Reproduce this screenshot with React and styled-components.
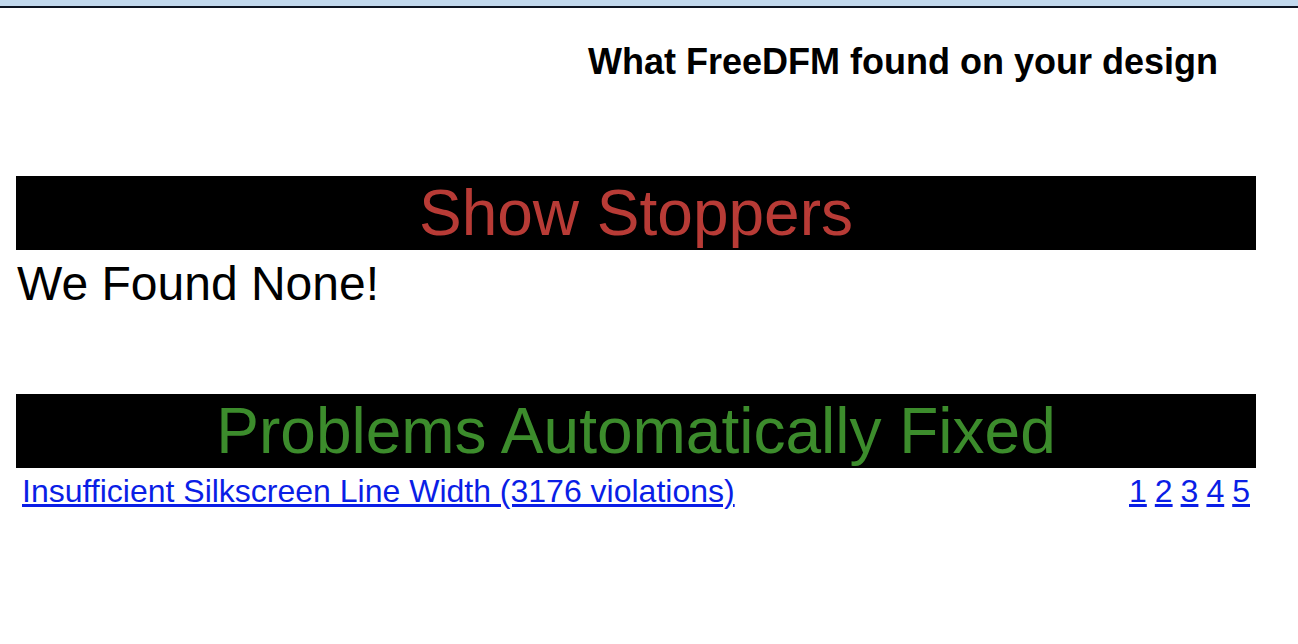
import React from "react";
import styled, { createGlobalStyle } from "styled-components";

const GlobalStyle = createGlobalStyle`
  body {
    margin: 0;
    background: #ffffff;
    font-family: "Liberation Sans", Arial, sans-serif;
  }
`;

const TopBar = styled.div`
  height: 6px;
  background: #c2d9ee;
  border-bottom: 2px solid #0d1422;
`;

const Page = styled.div`
  padding: 0 42px 0 16px;
`;

const Title = styled.h1`
  margin: 33px 38px 0 0;
  text-align: right;
  font-size: 36px;
  font-weight: bold;
  color: #000;
`;

const Section = styled.section`
  margin-top: ${(props) => props.$gap || "0px"};
`;

const Banner = styled.div`
  background: #000;
  color: ${(props) => props.$color};
  text-align: center;
  font-size: 64px;
  line-height: 74px;
`;

const Note = styled.div`
  font-size: 48px;
  line-height: 55px;
  padding: 6px 0 0 1px;
  color: #000;
`;

const ItemRow = styled.div`
  display: flex;
  justify-content: space-between;
  align-items: baseline;
  padding: 5px 6px 2px;
  font-size: 32px;
`;

const Link = styled.a`
  color: #0a1ee6;
  text-decoration: underline;
`;

const Pages = styled.div`
  display: flex;
  gap: 8px;
`;

const sections = [
  { pages: [1, 2, 3, 4, 5], label: "Insufficient Silkscreen Line Width (3176 violations)" },
];

export default function App() {
  return (
    <>
      <GlobalStyle />
      <TopBar />
      <Page>
        <Title>What FreeDFM found on your design</Title>

        <Section $gap="93px">
          <Banner $color="#b83b36">Show Stoppers</Banner>
          <Note>We Found None!</Note>
        </Section>

        <Section $gap="83px">
          <Banner $color="#3c8c2c">Problems Automatically Fixed</Banner>
          {sections.map((s) => (
            <ItemRow key={s.label}>
              <Link href="#">{s.label}</Link>
              <Pages>
                {s.pages.map((p) => (
                  <Link key={p} href="#">
                    {p}
                  </Link>
                ))}
              </Pages>
            </ItemRow>
          ))}
        </Section>
      </Page>
    </>
  );
}
